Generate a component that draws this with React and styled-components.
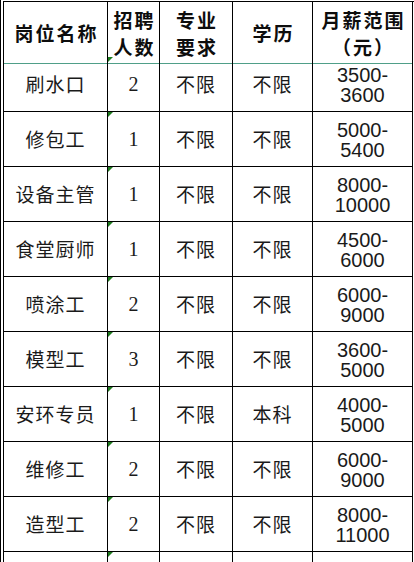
import React from "react";
import styled, { createGlobalStyle } from "styled-components";

const GlobalStyle = createGlobalStyle`
  html, body {
    margin: 0;
    padding: 0;
    background: #ffffff;
    overflow: hidden;
  }
  body {
    font-family: "Noto Sans CJK SC", "Liberation Serif", serif;
    color: #111111;
  }
`;

const jobs = [
  { name: "刷水口", count: "2", major: "不限", edu: "不限", pay: ["3500-", "3600"] },
  { name: "修包工", count: "1", major: "不限", edu: "不限", pay: ["5000-", "5400"] },
  { name: "设备主管", count: "1", major: "不限", edu: "不限", pay: ["8000-", "10000"] },
  { name: "食堂厨师", count: "1", major: "不限", edu: "不限", pay: ["4500-", "6000"] },
  { name: "喷涂工", count: "2", major: "不限", edu: "不限", pay: ["6000-", "9000"] },
  { name: "模型工", count: "3", major: "不限", edu: "不限", pay: ["3600-", "5000"] },
  { name: "安环专员", count: "1", major: "不限", edu: "本科", pay: ["4000-", "5000"] },
  { name: "维修工", count: "2", major: "不限", edu: "不限", pay: ["6000-", "9000"] },
  { name: "造型工", count: "2", major: "不限", edu: "不限", pay: ["8000-", "11000"] },
];

const Sheet = styled.div`
  border-left: 1px solid #000;
  padding: 1px 0 0 2px;
  height: 562px;
  box-sizing: border-box;
  overflow: hidden;
`;

const Grid = styled.div`
  display: grid;
  grid-template-columns: 104px 52px 73px 80px 100px;
  grid-auto-rows: 55px;
  width: 410px;
  border-left: 1px solid #000;
  border-top: 1px solid #000;
`;

const HeadCell = styled.div`
  height: 62px;
  box-sizing: border-box;
  border-right: 1px solid #000;
  border-bottom: 1px solid #4f9f88;
  display: flex;
  flex-direction: column;
  align-items: center;
  justify-content: center;
  font-family: "Noto Sans CJK SC", sans-serif;
  font-weight: 700;
  font-size: 19px;
  line-height: 27px;
  letter-spacing: 2px;
  color: #0d0d0d;
  padding-left: 2px;
`;

const Cell = styled.div`
  position: relative;
  box-sizing: border-box;
  border-right: 1px solid #000;
  border-bottom: 1px solid #000;
  display: flex;
  flex-direction: column;
  align-items: center;
  justify-content: center;
  font-size: ${(p) => (p.$kind === "cjk" ? "19px" : "20px")};
  line-height: ${(p) => (p.$kind === "pay" ? "20px" : "24px")};
  letter-spacing: ${(p) => (p.$kind === "cjk" ? "1px" : "0")};
  font-family: ${(p) =>
    p.$kind === "pay"
      ? '"Liberation Sans", Arial, sans-serif'
      : p.$kind === "num"
      ? '"Liberation Serif", serif'
      : '"Noto Sans CJK SC", sans-serif'};
  font-weight: 400;
  color: #1a1a1a;
  padding-top: ${(p) => (p.$kind === "pay" ? "1px" : "0")};
`;

const Flag = styled.span`
  position: absolute;
  top: 0;
  left: 0;
  width: 0;
  height: 0;
  border-top: 5px solid #1e7b1e;
  border-right: 5px solid transparent;
`;

const App = () => {
  return (
    <>
      <GlobalStyle />
      <Sheet>
        <Grid>
          <HeadCell>岗位名称</HeadCell>
          <HeadCell>
            <span>招聘</span>
            <span>人数</span>
          </HeadCell>
          <HeadCell>
            <span>专业</span>
            <span>要求</span>
          </HeadCell>
          <HeadCell>学历</HeadCell>
          <HeadCell>
            <span>月薪范围</span>
            <span>（元）</span>
          </HeadCell>

          {jobs.map((job) => (
            <React.Fragment key={job.name}>
              <Cell $kind="cjk">{job.name}</Cell>
              <Cell $kind="num">
                <Flag />
                {job.count}
              </Cell>
              <Cell $kind="cjk">{job.major}</Cell>
              <Cell $kind="cjk">{job.edu}</Cell>
              <Cell $kind="pay">
                <span>{job.pay[0]}</span>
                <span>{job.pay[1]}</span>
              </Cell>
            </React.Fragment>
          ))}

          <Cell $kind="cjk" />
          <Cell $kind="num">
            <Flag />
          </Cell>
          <Cell $kind="cjk" />
          <Cell $kind="cjk" />
          <Cell $kind="pay" />
        </Grid>
      </Sheet>
    </>
  );
};

export default App;
